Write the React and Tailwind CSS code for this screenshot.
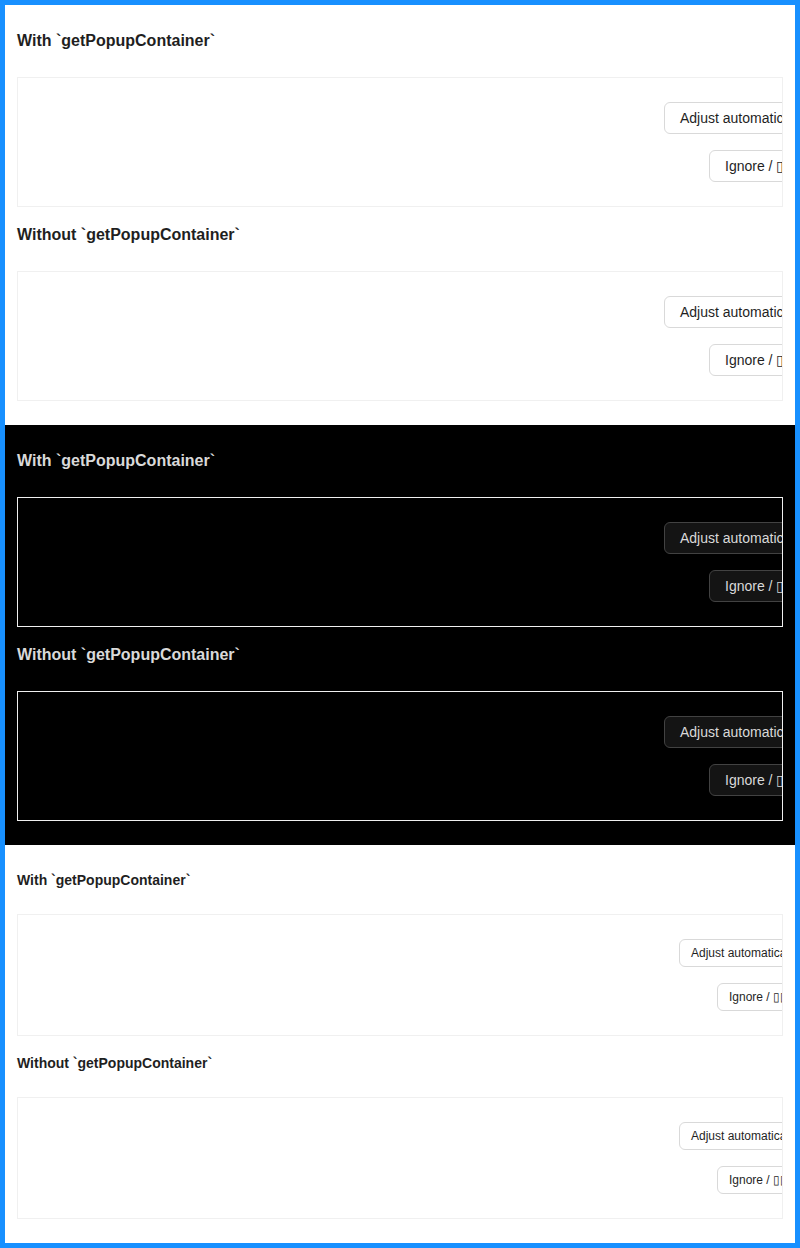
import React from "react";

const font = { fontFamily: '"Liberation Sans", Arial, sans-serif' };

function Box({ dark, small }) {
  const boxBorder = dark ? "border-[#f0f0f0]" : "border-[#f0f0f0]";
  const btn = dark
    ? "bg-[#141414] border-[#424242] text-[#d9d9d9]"
    : "bg-white border-[#d9d9d9] text-[#1f1f1f]";
  const size = small
    ? "h-[28px] px-[11px] text-[12px] rounded-[6px]"
    : "h-[32px] px-[15px] text-[14px] rounded-[6px]";
  return (
    <div className={`border ${boxBorder} overflow-hidden py-[24px] flex flex-col gap-[16px]`}>
      <div className={`flex whitespace-nowrap ${small ? "pl-[661px]" : "pl-[646px]"}`}>
        <button className={`border shrink-0 flex items-center ${btn} ${size}`}>
          Adjust automatically / ▯▯▯▯
        </button>
      </div>
      <div className={`flex whitespace-nowrap ${small ? "pl-[699px]" : "pl-[691px]"}`}>
        <button className={`border shrink-0 flex items-center ${btn} ${size}`}>
          Ignore / ▯▯
        </button>
      </div>
    </div>
  );
}

function Section({ dark, small }) {
  const head = small
    ? "text-[14px] leading-[22px] mb-[23px]"
    : "text-[16px] leading-[24px] mb-[24px]";
  const color = dark ? "text-[#d9d9d9]" : "text-[#1f1f1f]";
  return (
    <div className={`px-[12px] py-[24px] ${dark ? "bg-black" : "bg-white"}`}>
      <div className={`font-bold ${head} ${color}`}>With `getPopupContainer`</div>
      <Box dark={dark} small={small} />
      <div className={`font-bold mt-[16px] ${head} ${color}`}>Without `getPopupContainer`</div>
      <Box dark={dark} small={small} />
    </div>
  );
}

export default function App() {
  return (
    <div style={font} className="w-[800px] h-[1248px] border-[5px] border-[#1890ff] bg-white overflow-hidden">
      <Section />
      <Section dark />
      <Section small />
    </div>
  );
}
